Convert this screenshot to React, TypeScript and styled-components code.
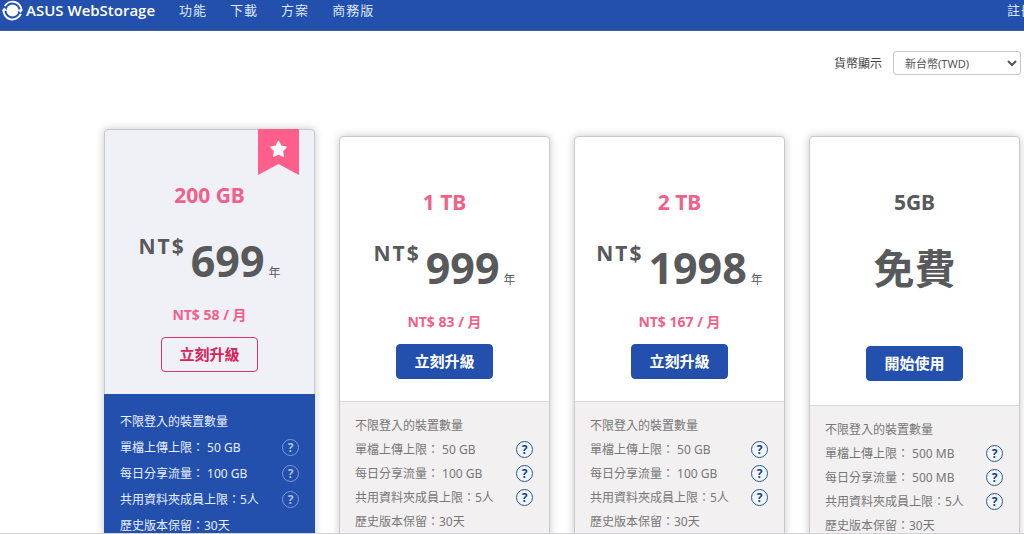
import React from "react";
import styled, { createGlobalStyle, css } from "styled-components";

const blue = "#2250ac";
const pink = "#f0608a";
const ink = "#58595b";

const GlobalStyle = createGlobalStyle`
  *, *::before, *::after { box-sizing: border-box; }
  body {
    margin: 0;
    background: #fff;
    color: ${ink};
    font-family: "Noto Sans", "Noto Sans CJK TC", sans-serif;
    font-size: 12px;
  }
  button, select { font-family: inherit; }
`;

const Page = styled.div`
  height: 100vh;
  overflow: hidden;
  border-bottom: 1px solid #d4d4d6;
`;

const Header = styled.header`
  display: flex;
  align-items: center;
  height: 31px;
  padding: 0 0 10px 2px;
  background: ${blue};
  border-bottom: 1px solid #3f5f9f;
  color: #fff;
`;

const Brand = styled.a`
  display: flex;
  align-items: center;
  gap: 3px;
  color: #fff;
  font-family: "Open Sans", sans-serif;
  font-size: 15px;
  font-weight: 600;
  line-height: 20px;
  text-decoration: none;
  white-space: nowrap;
`;

const Nav = styled.nav`
  display: flex;
  flex: 1;
  gap: 23px;
  margin-left: 24px;
`;

const NavLink = styled.a`
  color: #dfe8fa;
  font-size: 13px;
  letter-spacing: 1px;
  line-height: 20px;
  text-decoration: none;
  white-space: nowrap;
`;

const AccountLink = styled(NavLink)`
  flex: 0 0 17px;
  width: 17px;
`;

const CurrencyBar = styled.div`
  display: flex;
  justify-content: flex-end;
  align-items: center;
  gap: 11px;
  padding: 20px 3px 0 0;
`;

const CurrencyLabel = styled.label`
  font-size: 12px;
  color: #444;
`;

const CurrencySelect = styled.select`
  width: 128px;
  height: 24px;
  padding: 0 0 0 7px;
  border: 1px solid #c8c8c8;
  border-radius: 3px;
  background: #fff;
  color: #555;
  font-size: 11px;
`;

const Plans = styled.main`
  display: grid;
  grid-template-columns: repeat(4, 1fr);
  align-items: start;
  gap: 24px;
  padding: 61px 4px 0 104px;
`;

const Card = styled.article<{ $featured?: boolean }>`
  position: relative;
  margin-top: ${(p) => (p.$featured ? "-7px" : "0")};
  border: 1px solid #c9c9cc;
  border-radius: 4px;
  background: ${(p) => (p.$featured ? "#f0f0f7" : "#fff")};
  box-shadow: 0 0 8px rgba(0, 0, 0, 0.22);
`;

const Ribbon = styled.svg`
  position: absolute;
  top: -1px;
  right: 15px;
  width: 41px;
  height: 47px;
`;

const Offer = styled.div<{ $free?: boolean }>`
  display: flex;
  flex-direction: column;
  align-items: center;
  padding: 51px 0 ${(p) => (p.$free ? "24px" : "22px")};
`;

const Capacity = styled.h2<{ $free?: boolean }>`
  margin: 0;
  color: ${(p) => (p.$free ? ink : pink)};
  font-size: 21px;
  font-weight: 700;
  line-height: 28px;
`;

const Price = styled.p`
  display: flex;
  align-items: baseline;
  height: 60px;
  margin: 22px 0 0;
  line-height: 60px;
`;

const Currency = styled.span`
  align-self: flex-start;
  margin-right: 5px;
  font-size: 21px;
  font-weight: 700;
  letter-spacing: 2px;
  line-height: 30px;
`;

const Amount = styled.span`
  font-size: 43px;
  font-weight: 700;
`;

const FreeAmount = styled.span`
  font-size: 41px;
  font-weight: 700;
`;

const Period = styled.span`
  margin-left: 4px;
  font-size: 12px;
`;

const Monthly = styled.p`
  margin: 14px 0 12px;
  color: ${pink};
  font-size: 14px;
  font-weight: 700;
  line-height: 20px;
`;

const ActionButton = styled.button<{ $outline?: boolean; $free?: boolean }>`
  width: 97px;
  height: 35px;
  margin-top: ${(p) => (p.$free ? "48px" : "0")};
  padding: 0 0 2px;
  border: 1px solid ${(p) => (p.$outline ? "#d0366a" : blue)};
  border-radius: 4px;
  background: ${(p) => (p.$outline ? "transparent" : blue)};
  color: ${(p) => (p.$outline ? "#d62458" : "#fff")};
  font-size: 15px;
  font-weight: 700;
`;

const Features = styled.ul<{ $featured?: boolean }>`
  margin: 0;
  list-style: none;
  font-size: 12px;
  ${(p) =>
    p.$featured
      ? css`
          margin: 0 -1px;
          padding: 15px 16px 20px;
          background: ${blue};
          color: #e9effc;
          line-height: 26px;
        `
      : css`
          padding: 12px 16px 20px 15px;
          border-top: 1px solid #d9d8da;
          background: #f2f0f1;
          color: #777;
          line-height: 24px;
        `}
`;

const Feature = styled.li`
  display: flex;
  align-items: center;
  justify-content: space-between;
  white-space: nowrap;
`;

const HelpButton = styled.button<{ $featured?: boolean }>`
  display: flex;
  align-items: center;
  justify-content: center;
  width: 17px;
  height: 17px;
  margin-bottom: 2px;
  padding: 0;
  border: 1px solid ${(p) => (p.$featured ? "#7e9bdb" : "#2f5590")};
  border-radius: 50%;
  background: ${(p) => (p.$featured ? "transparent" : "#eef6ff")};
  color: ${(p) => (p.$featured ? "#a9bfee" : "#1f3f78")};
  font-size: 12px;
  font-weight: 700;
  line-height: 15px;
`;

function LogoMark() {
  return (
    <svg width="21" height="21" viewBox="0 0 21 21" aria-hidden="true">
      <circle cx="10.5" cy="10.5" r="6" fill="#fff" />
      <path d="M2.8 6A9 9 0 0 1 19.5 10.5" fill="none" stroke="#fff" strokeWidth="2" />
      <path d="M18.8 13.8A9 9 0 0 1 1.5 9.5" fill="none" stroke="#fff" strokeWidth="2" />
      <path d="M15.6 9.6h5.4l-2.4 3.4z" fill="#fff" />
      <path d="M5.4 10.8H0l2.2-3.4z" fill="#fff" />
    </svg>
  );
}

function StarRibbon() {
  return (
    <Ribbon viewBox="0 0 41 47" aria-hidden="true">
      <path d="M0 0h41v46L20.5 35 0 46z" fill="#ff5f8a" />
      <path
        d="M20.5 12.7l2.3 4.7 5.2.8-3.8 3.7.9 5.2-4.6-2.4-4.6 2.4.9-5.2-3.8-3.7 5.2-.8z"
        fill="#fff"
        stroke="#fff"
        strokeWidth="1.6"
        strokeLinejoin="round"
      />
    </Ribbon>
  );
}

type Plan = {
  capacity: string;
  amount?: string;
  monthly?: string;
  action: string;
  upload: string;
  traffic: string;
  featured?: boolean;
};

const plans: Plan[] = [
  { capacity: "200 GB", amount: "699", monthly: "58", action: "立刻升級", upload: "50 GB", traffic: "100 GB", featured: true },
  { capacity: "1 TB", amount: "999", monthly: "83", action: "立刻升級", upload: "50 GB", traffic: "100 GB" },
  { capacity: "2 TB", amount: "1998", monthly: "167", action: "立刻升級", upload: "50 GB", traffic: "100 GB" },
  { capacity: "5GB", action: "開始使用", upload: "500 MB", traffic: "500 MB" },
];

function PlanCard({ plan }: { plan: Plan }) {
  const free = !plan.amount;
  const features = [
    { text: "不限登入的裝置數量" },
    { text: `單檔上傳上限： ${plan.upload}`, help: true },
    { text: `每日分享流量： ${plan.traffic}`, help: true },
    { text: "共用資料夾成員上限：5人", help: true },
    { text: "歷史版本保留：30天" },
  ];
  return (
    <Card $featured={plan.featured}>
      {plan.featured && <StarRibbon />}
      <Offer $free={free}>
        <Capacity $free={free}>{plan.capacity}</Capacity>
        {free ? (
          <Price>
            <FreeAmount>免費</FreeAmount>
          </Price>
        ) : (
          <>
            <Price>
              <Currency>NT$</Currency>
              <Amount>{plan.amount}</Amount>
              <Period>年</Period>
            </Price>
            <Monthly>NT$ {plan.monthly} / 月</Monthly>
          </>
        )}
        <ActionButton type="button" $outline={plan.featured} $free={free}>
          {plan.action}
        </ActionButton>
      </Offer>
      <Features $featured={plan.featured}>
        {features.map((f) => (
          <Feature key={f.text}>
            <span>{f.text}</span>
            {f.help && (
              <HelpButton type="button" $featured={plan.featured}>
                ?
              </HelpButton>
            )}
          </Feature>
        ))}
      </Features>
    </Card>
  );
}

export default function App() {
  return (
    <Page>
      <GlobalStyle />
      <Header>
        <Brand href="#">
          <LogoMark />
          ASUS WebStorage
        </Brand>
        <Nav>
          <NavLink href="#features">功能</NavLink>
          <NavLink href="#download">下載</NavLink>
          <NavLink href="#plans">方案</NavLink>
          <NavLink href="#business">商務版</NavLink>
        </Nav>
        <AccountLink href="#register">註冊</AccountLink>
      </Header>
      <CurrencyBar>
        <CurrencyLabel htmlFor="currency">貨幣顯示</CurrencyLabel>
        <CurrencySelect id="currency" defaultValue="TWD">
          <option value="TWD">新台幣(TWD)</option>
        </CurrencySelect>
      </CurrencyBar>
      <Plans>
        {plans.map((plan) => (
          <PlanCard key={plan.capacity} plan={plan} />
        ))}
      </Plans>
    </Page>
  );
}
